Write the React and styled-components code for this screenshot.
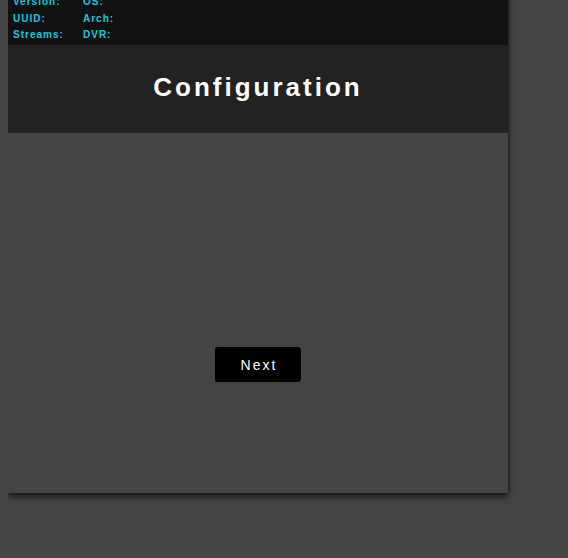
import { Fragment } from "react";
import styled, { createGlobalStyle } from "styled-components";

const GlobalStyle = createGlobalStyle`
  html, body {
    background: #444444;
  }
  body {
    margin: 0 8px;
    min-height: 100vh;
    font-family: "Liberation Sans", Arial, sans-serif;
  }
`;

const Panel = styled.div`
  width: 500px;
  margin: -9px 0 40px;
  background: #444444;
  box-shadow: 0 4px 6px rgba(0, 0, 0, 0.6), 1px 0 3px rgba(0, 0, 0, 0.3);
`;

const InfoBar = styled.div`
  display: grid;
  grid-template-columns: 70px 70px;
  padding: 3px 5px 1px;
  background: #111111;
  color: #1ec6de;
  font-size: 10px;
  font-weight: bold;
  letter-spacing: 1px;
  line-height: 16.5px;
`;

const Header = styled.div`
  display: flex;
  align-items: center;
  justify-content: center;
  height: 88px;
  padding-bottom: 2px;
  box-sizing: border-box;
  background: #222222;
`;

const Title = styled.h1`
  margin: 0;
  color: #ffffff;
  font-size: 26px;
  font-weight: bold;
  letter-spacing: 3px;
`;

const Body = styled.div`
  display: flex;
  flex-direction: column;
  align-items: center;
  height: 360px;
  padding-top: 214px;
  box-sizing: border-box;
`;

const Button = styled.button`
  width: 86px;
  height: 35px;
  border: none;
  border-radius: 3px;
  background: #000000;
  color: #ffffff;
  font-family: "Liberation Sans", Arial, sans-serif;
  font-size: 14px;
  letter-spacing: 2px;
  padding: 1px 0 0 2px;
  cursor: pointer;
`;

const rows = [
  ["Version:", "OS:"],
  ["UUID:", "Arch:"],
  ["Streams:", "DVR:"],
];

export default function App() {
  return (
    <>
      <GlobalStyle />
      <Panel>
        <InfoBar>
          {rows.map(([a, b]) => (
            <Fragment key={a}>
              <span>{a}</span>
              <span>{b}</span>
            </Fragment>
          ))}
        </InfoBar>
        <Header>
          <Title>Configuration</Title>
        </Header>
        <Body>
          <Button>Next</Button>
        </Body>
      </Panel>
    </>
  );
}
